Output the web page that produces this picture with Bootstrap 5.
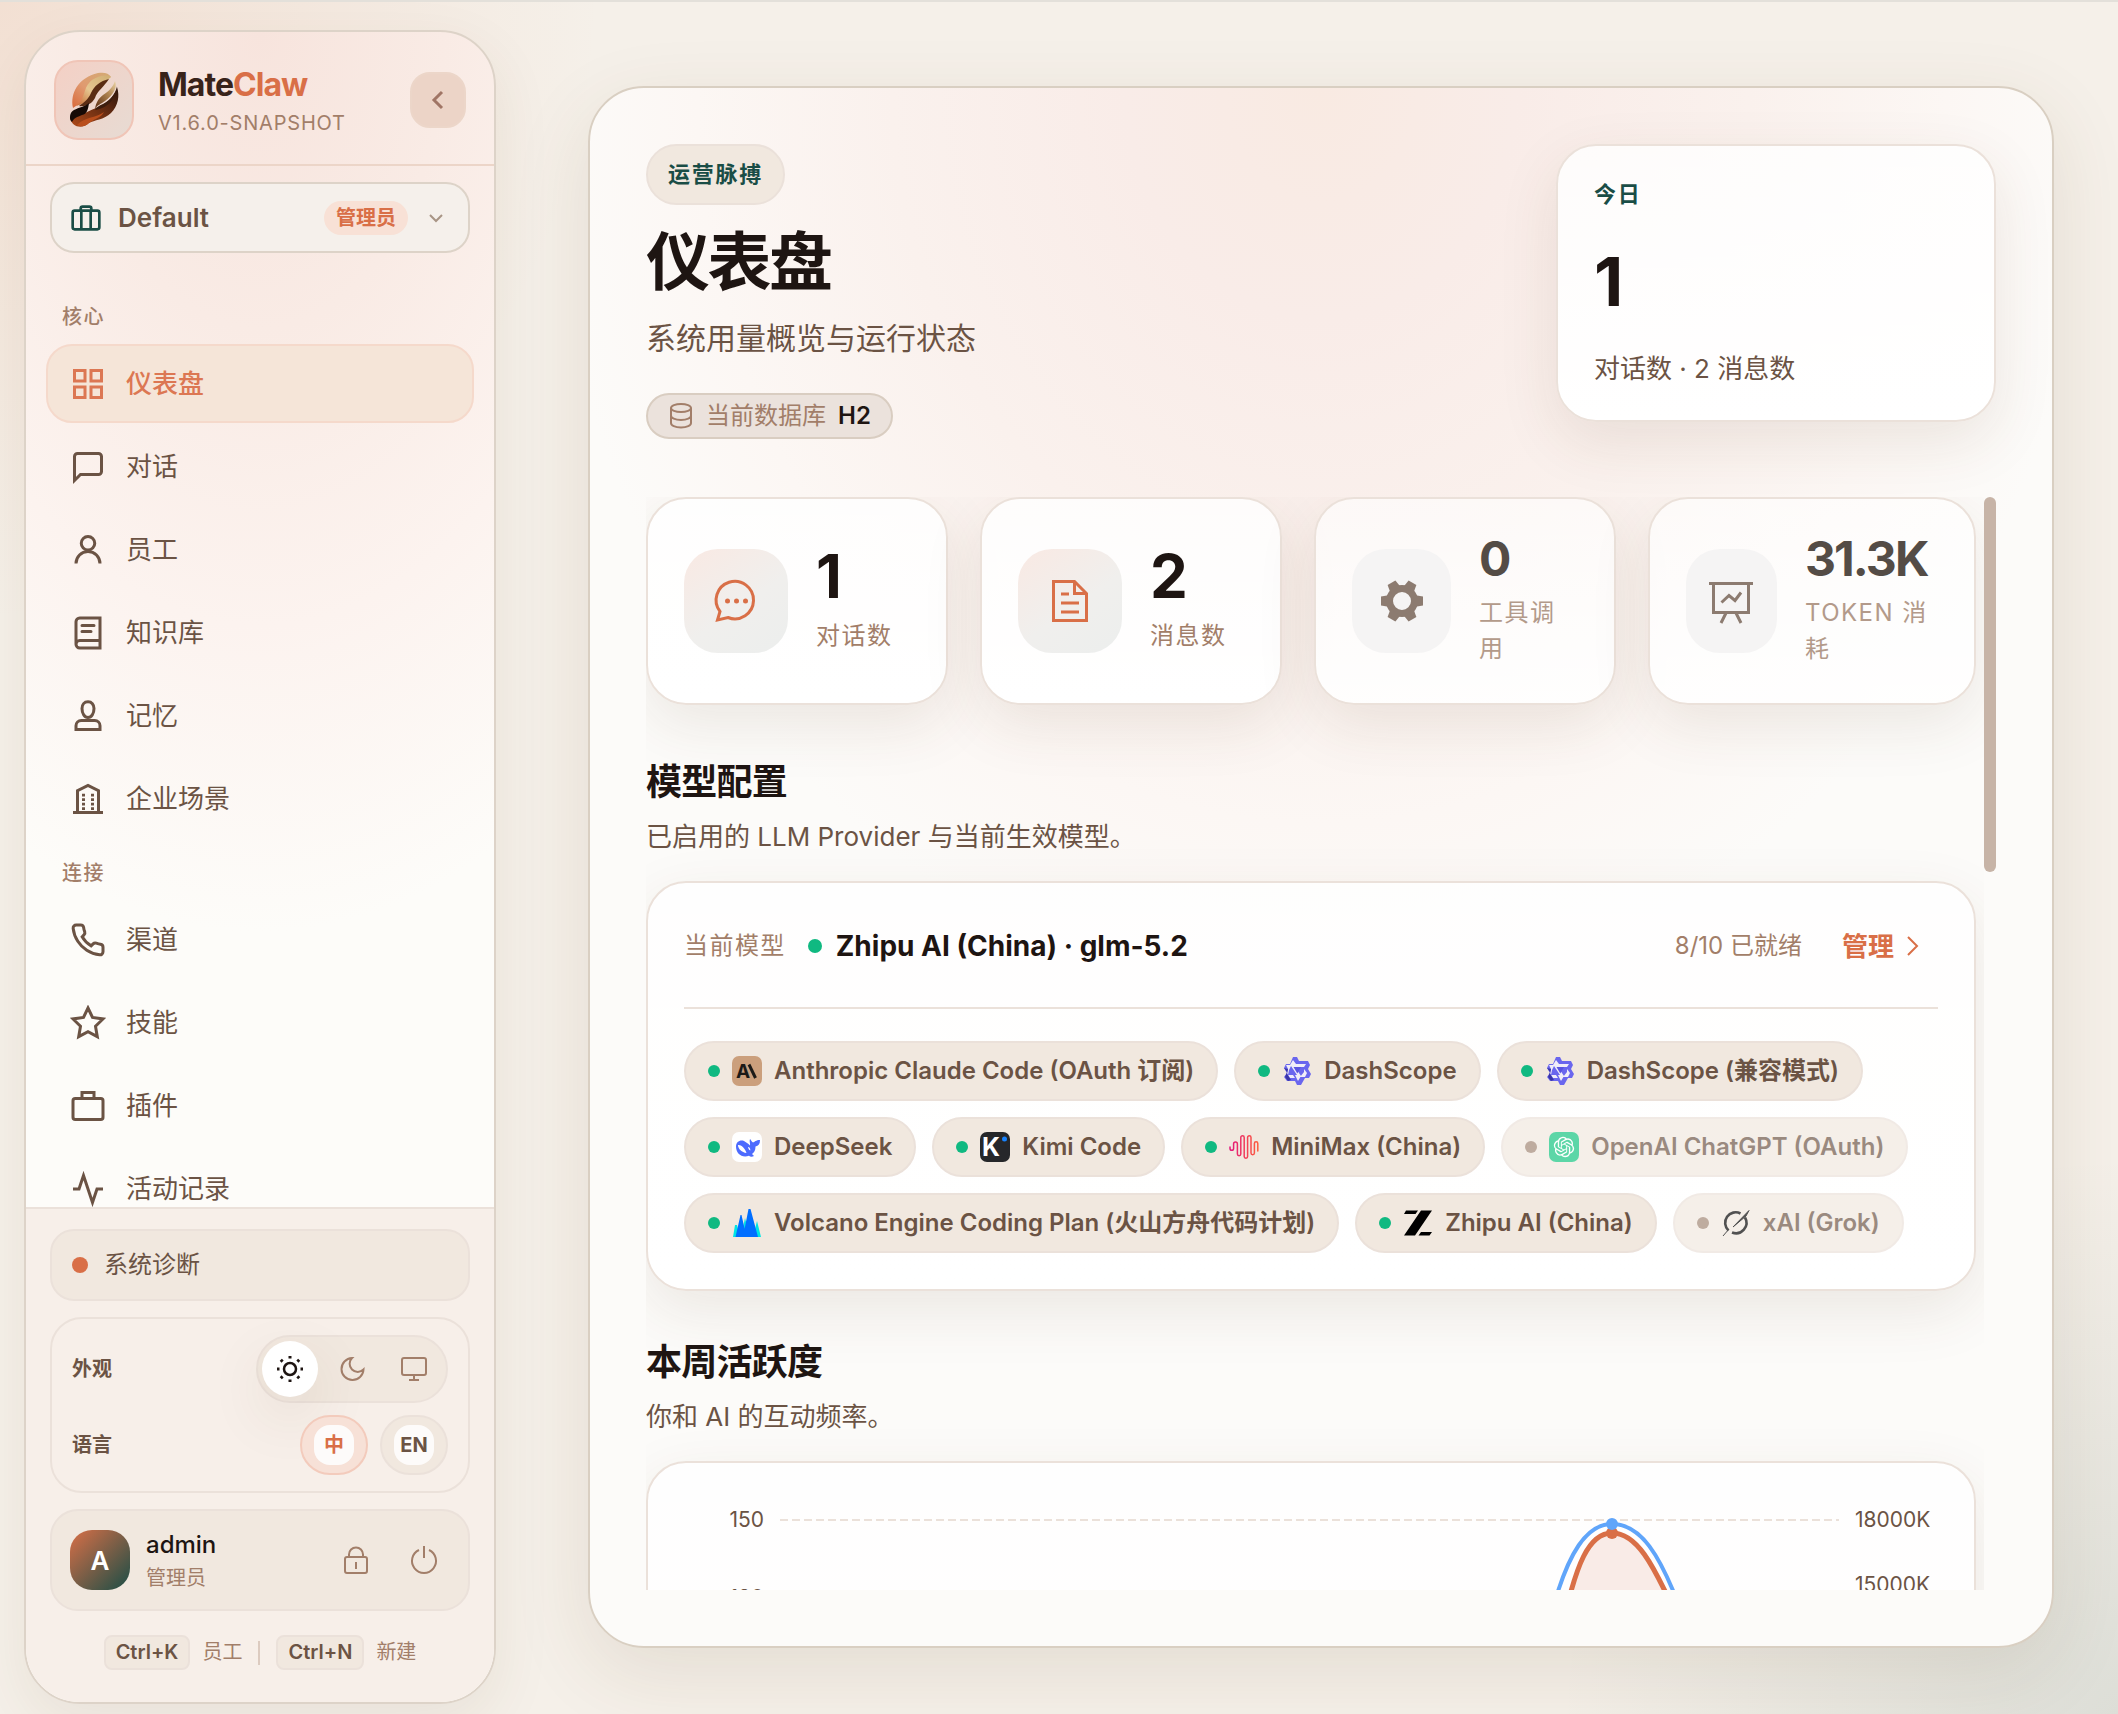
<!DOCTYPE html>
<html lang="zh-CN" data-bs-theme="light">
<head>
<meta charset="utf-8">
<meta name="viewport" content="width=device-width, initial-scale=1">
<title>MateClaw · 仪表盘</title>
<link href="https://cdn.jsdelivr.net/npm/bootstrap@5.3.0/dist/css/bootstrap.min.css" rel="stylesheet">
<style>
:root{
  --mc-primary:#d96f47; --mc-ink:#1e1512; --mc-text:#6b5344; --mc-muted:#a27e69; --mc-green:#1a4d46;
  --mc-line:#ebe1da; --mc-line-strong:#ddd3c8; --mc-sand:#f1e8df; --mc-ok:#10b981;
}
body{
  font-family:Inter,"Noto Sans CJK SC",sans-serif; color:var(--mc-text); line-height:1.5;
  height:100vh; overflow:hidden; border-top:2px solid #e3e0da;
  padding:28px 64px 10px 24px; gap:92px;
  background:
    radial-gradient(ellipse 600px 620px at 0 0,rgba(232,150,110,.18),transparent),
    radial-gradient(ellipse 560px 560px at 100% 100%,rgba(26,77,70,.11),transparent),
    #f5f0e9;
}
svg{flex:none;display:block}
.ico{fill:none;stroke:currentColor;stroke-width:2}
.ico-bold{stroke-width:3}
button{color:inherit}

/* sidebar */
.side{
  width:472px; border:2px solid var(--mc-line-strong); border-radius:56px;
  background:radial-gradient(ellipse 560px 900px at 50% 0,#f7e4dd 0%,#f9ebe5 33%,#fcf3ef 66%,#fdfcf9 100%);
  box-shadow:0 20px 60px rgba(90,60,30,.08);
}
.side-head{padding:28px 28px 24px;border-bottom:2px solid #ecd5c8}
.logo-tile{width:80px;height:80px;border-radius:24px;border:2px solid #f0c5b7;background:linear-gradient(135deg,#f4d0c5,#e7dbd3)}
.brand{padding-top:4px}
.brand-name{font-size:32px;font-weight:700;line-height:38px;letter-spacing:-.03em;color:#38231a;margin-bottom:4px}
.brand-name span{color:var(--mc-primary)}
.brand-ver{font-size:20px;line-height:30px;letter-spacing:.04em;color:var(--mc-muted)}
.fold-btn{width:56px;height:56px;border-radius:20px;border:2px solid #ecd6c9;background:#ecd4c7;color:#a07565}
.ws-btn{margin:16px 24px 0;height:71px;flex:none;border-radius:24px;border:2px solid var(--mc-line-strong);background:#f5f0eb;padding:0 20px 0 18px;gap:16px}
.ws-btn .case{color:var(--mc-green)}
.ws-btn .caret{color:#a89585}
.ws-name{font-size:26px;font-weight:600}
.ws-role{font-size:20px;font-weight:600;line-height:34px;border-radius:17px;padding:0 12px;background:#f8e1d6;color:var(--mc-primary)}
.nav-scroll{padding:49px 20px 0}
.nav-title{font-size:20px;font-weight:500;line-height:30px;letter-spacing:.08em;padding-left:16px;margin-bottom:12px;color:var(--mc-muted)}
.nav-list{gap:4px;margin-bottom:20px}
.nav-list .nav-link{height:79px;padding:0 22px;gap:20px;font-size:26px;color:var(--mc-text);border:2px solid transparent;border-radius:26px}
.nav-list .nav-link.active{background:#f5e5d8;border-color:#f5d9cb;color:#dc7753;font-weight:500}
.side-foot{border-top:2px solid var(--mc-line);background:#f7efe9;padding:20px 24px 32px;gap:16px}
.diag{height:72px;border-radius:24px;border:2px solid var(--mc-line);background:var(--mc-sand);padding:0 20px;gap:16px;font-size:24px}
.diag i{width:16px;height:16px;border-radius:50%;background:var(--mc-primary)}
.prefs{border:2px solid var(--mc-line);border-radius:32px;padding:16px 20px;gap:12px}
.pref-label{font-size:20px;font-weight:600}
.seg{height:68px;border:2px solid var(--mc-line);border-radius:34px;background:var(--mc-sand);padding:4px;gap:6px}
.seg button{width:56px;height:56px;border:0;border-radius:50%;background:none;color:var(--mc-muted);padding:0}
.seg button.on{background:#fff;color:var(--mc-ink);box-shadow:0 20px 60px rgba(90,60,30,.10)}
.langs{gap:12px}
.lang{width:68px;height:60px;border-radius:30px;border:2px solid var(--mc-line);background:var(--mc-sand);padding:0;font-size:20px;font-weight:700}
.lang span{width:40px;height:40px;border-radius:16px;background:#fdfbfa}
.lang.on{border-color:#f3cbbc;background:#f7e1d7;color:var(--mc-primary)}
.user{height:102px;border:2px solid var(--mc-line);border-radius:28px;background:var(--mc-sand);padding:0 16px 0 18px}
.avatar{width:60px;height:60px;border-radius:22px;background:linear-gradient(135deg,#d96f47,#1a4d46);color:#fff;font-size:26px;font-weight:600}
.user-name{font-size:24px;font-weight:500;line-height:36px;color:var(--mc-ink)}
.user-role{font-size:20px;line-height:30px;color:var(--mc-muted)}
.user-acts{gap:12px}
.plain-btn{width:56px;height:56px;border:0;background:none;color:var(--mc-muted);padding:0}
.keys{margin-top:8px;gap:12px;font-size:20px;color:var(--mc-muted);line-height:35px}
.keys kbd{font:600 20px/31px Inter,sans-serif;border:2px solid var(--mc-line);border-radius:8px;background:var(--mc-sand);color:var(--mc-text);padding:0 10px}
.keys i{width:2px;height:24px;background:#dccbc0;margin:0 4px}

/* main panel */
.panel{
  margin:56px 0; border:2px solid #d9cfc2; border-radius:56px; padding:56px; gap:58px; min-width:0;
  background:radial-gradient(ellipse 780px 920px at 50% 0,#f9eae2 0%,#f9ece8 25%,#faf1ed 55%,#fcf7f4 80%,#fcfbf9 100%);
  box-shadow:0 24px 80px rgba(90,60,30,.11);
}
.eyebrow{font-size:22px;font-weight:600;line-height:33px;letter-spacing:.08em;color:var(--mc-green)}
.eyebrow-pill{border:2px solid var(--mc-line);border-radius:31px;background:var(--mc-sand);padding:12px 20px}
.page-title{font-size:64px;font-weight:700;line-height:74px;letter-spacing:-.04em;color:var(--mc-ink);margin:20px 0 14px}
.page-sub{font-size:30px;line-height:50px;margin:0 0 30px}
.db-pill{height:46px;border:2px solid #d9cdc1;border-radius:23px;background:#ebe2dc;padding:0 20px;gap:12px;font-size:24px;color:var(--mc-muted)}
.db-pill strong{font-weight:600;color:var(--mc-ink)}
.surface{border:2px solid var(--mc-line);background:linear-gradient(180deg,rgba(255,255,255,.82),#fff);box-shadow:0 20px 60px rgba(90,60,30,.10)}
.today{width:440px;height:278px;border-radius:40px;padding:32px 36px}
.today-num{font-size:68px;font-weight:700;line-height:80px;color:var(--mc-ink)}
.today-desc{font-size:26px;line-height:38px}
.scroller{min-height:0}
.feed{margin-right:12px;padding-right:8px;overflow:hidden;min-height:0}
.thumb{position:absolute;top:0;right:0;width:12px;height:34.3%;border-radius:6px;background:#c7b4a7}
.stats{gap:32px;padding-bottom:6px}
.stat{flex:1 1 0;height:208px;border-radius:40px;padding:0 36px 4px;gap:28px}
.stat.wide{flex:0 0 328px}
.stat-ico{flex:0 0 104px;height:104px;margin-top:4px;border-radius:34px;background:linear-gradient(145deg,#f9e9e3,#f0efed 55%,#eceeed);color:var(--mc-primary)}
.stat-num{font-size:60px;font-weight:700;line-height:64px;letter-spacing:-.04em;color:var(--mc-ink);margin-bottom:10px}
.stat-label{font-size:24px;line-height:36px;letter-spacing:.06em;color:var(--mc-muted)}
.stat.quiet{background:linear-gradient(180deg,rgba(255,255,255,.6),rgba(255,255,255,.9))}
.quiet .stat-ico{flex-basis:99px;background:#f5f4f4;color:#8c7b70}
.quiet.wide .stat-ico{flex-basis:91px}
.quiet .stat-num{font-size:48px;line-height:56px;color:#544c46;margin-bottom:8px}
.quiet .stat-label{color:#b39a8a}
.sec-title{font-size:36px;font-weight:700;line-height:54px;letter-spacing:-.02em;color:var(--mc-ink);margin:44px 0 8px}
.sec-sub{font-size:26px;line-height:40px;margin:0 0 24px}
.box{border-radius:40px;padding:36px}
.cur{height:90px;margin-bottom:32px;padding-bottom:34px;border-bottom:2px solid var(--mc-line)}
.cur-label{font-size:24px;letter-spacing:.06em;color:var(--mc-muted)}
.cur-dot{width:14px;height:14px;border-radius:50%;background:var(--mc-ok);margin:0 14px 0 22px}
.cur-name{font-size:28px;font-weight:700;color:var(--mc-ink)}
.cur-count{font-size:24px;color:var(--mc-muted)}
.cur-link{font-size:26px;font-weight:600;color:var(--mc-primary);gap:12px;padding:0 18px 0 40px}
.chips{gap:16px}
.chip{height:60px;border:2px solid var(--mc-line);border-radius:30px;background:var(--mc-sand);padding:0 22px;gap:12px;font-size:24px;font-weight:600;color:var(--mc-text)}
.chip i{width:12px;height:12px;border-radius:50%;background:var(--mc-ok)}
.chip.off{opacity:.68}
.chip.off i{background:#a08573}
.chart text{font-family:Inter,sans-serif;font-size:21px;fill:var(--mc-text)}
</style>
</head>
<body class="d-flex m-0">

<aside class="side d-flex flex-column flex-shrink-0 overflow-hidden">
  <header class="side-head d-flex align-items-center">
    <span class="logo-tile d-flex align-items-center justify-content-center">
      <svg width="76" height="76" viewBox="2 2 76 76" role="img" aria-label="MateClaw">
        <defs>
          <linearGradient id="bA" x1="0" y1="1" x2="1" y2="0"><stop offset="0" stop-color="#d9693a"/><stop offset=".45" stop-color="#e09a70"/><stop offset="1" stop-color="#d3ab74"/></linearGradient>
          <linearGradient id="bB" x1="0" y1="1" x2="1" y2="0"><stop offset="0" stop-color="#c4652f"/><stop offset=".45" stop-color="#e6c690"/><stop offset="1" stop-color="#cfae72"/></linearGradient>
          <linearGradient id="bC" x1="0" y1="1" x2="1" y2="0"><stop offset="0" stop-color="#b04a1a"/><stop offset=".5" stop-color="#6e2f12"/><stop offset="1" stop-color="#2a150b"/></linearGradient>
          <linearGradient id="bD" x1="0" y1="1" x2="1" y2="0"><stop offset="0" stop-color="#5a2c12"/><stop offset=".6" stop-color="#b08552"/><stop offset="1" stop-color="#ead3a4"/></linearGradient>
        </defs>
        <path fill="url(#bA)" d="M19 48C16 33 24 18 44 13 50 12 55 13 57 17 48 19 42 25 38 34 34 42 27 42 19 48Z"/>
        <path fill="url(#bB)" d="M22 46C32 40 28 28 38 20 44 16 52 14 57 17 52 22 46 24 42 31 38 38 33 43 22 46Z"/>
        <path fill="#5b2d14" d="M55 19C46 21 40 26 37 33 34 40 29 43 25 46 31 47 38 44 41 38 43 31 50 27 55 19Z"/>
        <path fill="url(#bC)" d="M63 27C66 36 64 46 57 53 50 60 40 60 35 63 29 69 18 68 16 58 26 56 32 52 42 48 52 44 60 38 63 27Z"/>
        <path fill="#160a06" d="M16 57C17 47 26 50 35 43 34 50 33 54 28 55 23 57 20 58 18 62 16 60 16 59 16 57Z"/>
        <path fill="#b94e1c" d="M23 65C30 57 42 58 50 52 47 58 40 59 35 63 31 67 27 67 23 65Z"/>
        <path fill="url(#bD)" d="M61 21C64 28 58 36 51 41 47 44 43 45 41 49 42 43 44 39 49 35 55 31 59 27 61 21Z"/>
        <path fill="#3d1d0d" d="M63 26C62 34 56 40 49 44 45 46 42 47 41 50 50 49 62 42 63 26Z"/>
      </svg>
    </span>
    <div class="brand ms-4 flex-grow-1">
      <div class="brand-name">Mate<span>Claw</span></div>
      <div class="brand-ver">V1.6.0-SNAPSHOT</div>
    </div>
    <button type="button" class="fold-btn d-flex align-items-center justify-content-center p-0" aria-label="收起侧栏">
      <svg class="ico ico-bold" width="24" height="24" viewBox="0 0 24 24"><path d="M16 4 8 12l8 8"/></svg>
    </button>
  </header>

  <button type="button" class="ws-btn d-flex align-items-center">
    <svg class="ico case" width="32" height="32" viewBox="0 0 24 24"><rect x="2" y="6.500" width="20" height="14" rx="1.500"/><path d="M8 6.500V5A1.500 1.500 0 0 1 9.500 3.500h5A1.500 1.500 0 0 1 16 5v1.500M8.500 6.500v14M15.500 6.500v14"/></svg>
    <span class="ws-name">Default</span>
    <span class="ws-role ms-auto">管理员</span>
    <svg class="ico caret" width="24" height="24" viewBox="0 0 24 24"><path d="m6 9 6 6 6-6"/></svg>
  </button>

  <div class="nav-scroll flex-grow-1 overflow-hidden">
    <div class="nav-title">核心</div>
    <nav class="nav-list nav flex-column flex-nowrap">
      <a href="#" class="nav-link active d-flex align-items-center" aria-current="page"><svg class="ico" width="36" height="36" viewBox="0 0 24 24"><path d="M3 3h7v7H3zM14 3h7v7h-7zM3 14h7v7H3zM14 14h7v7h-7z"/></svg>仪表盘</a>
      <a href="#" class="nav-link d-flex align-items-center"><svg class="ico" width="36" height="36" viewBox="0 0 24 24"><path d="M21 15a2 2 0 0 1-2 2H7l-4 4V5a2 2 0 0 1 2-2h14a2 2 0 0 1 2 2z"/></svg>对话</a>
      <a href="#" class="nav-link d-flex align-items-center"><svg class="ico" width="36" height="36" viewBox="0 0 24 24"><circle cx="12" cy="7.500" r="4.500"/><path d="M4 21a8 8 0 0 1 16 0"/></svg>员工</a>
      <a href="#" class="nav-link d-flex align-items-center"><svg class="ico" width="36" height="36" viewBox="0 0 24 24"><path d="M4 19.500A2.500 2.500 0 0 1 6.500 17H20M6.500 2H20v20H6.500A2.500 2.500 0 0 1 4 19.500v-15A2.500 2.500 0 0 1 6.500 2zM8 7h8M8 11h6" stroke-linecap="round"/></svg>知识库</a>
      <a href="#" class="nav-link d-flex align-items-center"><svg class="ico" width="36" height="36" viewBox="0 0 24 24"><path d="M12 2.500c-2.500 0-4 1.900-4 4.500 0 3.400 1.700 6 4 6s4-2.600 4-6c0-2.600-1.500-4.500-4-4.500zM4 21v-2.500A3.500 3.500 0 0 1 7.500 15h9a3.500 3.500 0 0 1 3.500 3.500V21zM12 12v3"/></svg>记忆</a>
      <a href="#" class="nav-link d-flex align-items-center"><svg class="ico" width="36" height="36" viewBox="0 0 24 24"><path d="M2 21h20M5 21V6.500L12 3l7 3.500V21"/><path stroke-dasharray="1.800 1.200" d="M9 8.500v11M15 8.500v11"/></svg>企业场景</a>
    </nav>
    <div class="nav-title">连接</div>
    <nav class="nav-list nav flex-column flex-nowrap">
      <a href="#" class="nav-link d-flex align-items-center"><svg class="ico" width="36" height="36" viewBox="0 0 24 24"><path d="M22 16.900v3a2 2 0 0 1-2.200 2 19.800 19.800 0 0 1-8.600-3.100 19.500 19.500 0 0 1-6-6A19.800 19.800 0 0 1 2.100 4.200 2 2 0 0 1 4.100 2h3a2 2 0 0 1 2 1.700c.1 1 .4 1.900.7 2.800a2 2 0 0 1-.5 2.100L8.100 9.900a16 16 0 0 0 6 6l1.300-1.300a2 2 0 0 1 2.100-.5c.9.300 1.800.6 2.800.7a2 2 0 0 1 1.700 2.100z"/></svg>渠道</a>
      <a href="#" class="nav-link d-flex align-items-center"><svg class="ico" width="36" height="36" viewBox="0 0 24 24"><path d="m12 2 3 6.300 7 1-5 4.900 1.200 6.900L12 17.800l-6.200 3.300L7 14.200 2 9.300l7-1z"/></svg>技能</a>
      <a href="#" class="nav-link d-flex align-items-center"><svg class="ico" width="36" height="36" viewBox="0 0 24 24"><rect x="2" y="7" width="20" height="14" rx="1.500"/><path d="M8 7V3h8v4"/></svg>插件</a>
      <a href="#" class="nav-link d-flex align-items-center"><svg class="ico" width="36" height="36" viewBox="0 0 24 24"><path d="M22 12h-4l-3 9L9 3l-3 9H2"/></svg>活动记录</a>
    </nav>
  </div>

  <footer class="side-foot d-flex flex-column flex-shrink-0">
    <button type="button" class="diag d-flex align-items-center"><i></i>系统诊断</button>
    <div class="prefs d-flex flex-column">
      <div class="d-flex align-items-center justify-content-between">
        <span class="pref-label">外观</span>
        <div class="seg d-flex" role="group" aria-label="外观">
          <button type="button" class="on d-flex align-items-center justify-content-center" aria-label="浅色"><svg class="ico ico-bold" width="28" height="28" viewBox="0 0 28 28"><circle cx="14" cy="14" r="6" stroke-width="2.500"/><path d="M14 1v2.500M14 24.500V27M1 14h2.500M24.500 14H27M4.800 4.800l1.800 1.800M21.400 21.400l1.800 1.800M23.200 4.800l-1.800 1.800M6.600 21.400l-1.800 1.800"/></svg></button>
          <button type="button" class="d-flex align-items-center justify-content-center" aria-label="深色"><svg class="ico" width="28" height="28" viewBox="0 0 28 28"><path d="M14 3A11 11 0 1 0 25.500 14.500 8 8 0 0 1 14 3z"/></svg></button>
          <button type="button" class="d-flex align-items-center justify-content-center" aria-label="跟随系统"><svg class="ico" width="28" height="28" viewBox="0 0 28 28"><rect x="2" y="3" width="24" height="17" rx="2"/><path d="M9 25h10M14 20v5"/></svg></button>
        </div>
      </div>
      <div class="langs d-flex align-items-center">
        <span class="pref-label me-auto">语言</span>
        <button type="button" class="lang on d-flex align-items-center justify-content-center"><span class="d-flex align-items-center justify-content-center">中</span></button>
        <button type="button" class="lang d-flex align-items-center justify-content-center"><span class="d-flex align-items-center justify-content-center">EN</span></button>
      </div>
    </div>
    <div class="user d-flex align-items-center">
      <span class="avatar d-flex align-items-center justify-content-center">A</span>
      <div class="ms-3 flex-grow-1">
        <div class="user-name">admin</div>
        <div class="user-role">管理员</div>
      </div>
      <div class="user-acts d-flex">
        <button type="button" class="plain-btn d-flex align-items-center justify-content-center" aria-label="锁定"><svg class="ico" width="28" height="32" viewBox="0 0 28 32"><rect x="3" y="13" width="22" height="16" rx="2"/><path d="M7 13v-2.500a7 7 0 0 1 14 0V13M14 18v7"/></svg></button>
        <button type="button" class="plain-btn d-flex align-items-center justify-content-center" aria-label="退出"><svg class="ico" width="32" height="32" viewBox="0 0 32 32"><path d="M11 6a12 12 0 1 0 10 0M16 2v12"/></svg></button>
      </div>
    </div>
    <div class="keys d-flex align-items-center justify-content-center">
      <kbd>Ctrl+K</kbd><span>员工</span><i></i><kbd>Ctrl+N</kbd><span>新建</span>
    </div>
  </footer>
</aside>

<main class="panel d-flex flex-column flex-grow-1">
  <header class="d-flex justify-content-between align-items-start">
    <div class="d-flex flex-column align-items-start">
      <span class="eyebrow eyebrow-pill">运营脉搏</span>
      <h1 class="page-title">仪表盘</h1>
      <p class="page-sub">系统用量概览与运行状态</p>
      <span class="db-pill d-inline-flex align-items-center">
        <svg class="ico" width="26" height="28" viewBox="0 0 26 28"><ellipse cx="13" cy="6" rx="10" ry="4"/><path d="M3 6v15c0 2.500 4 4.500 10 4.500s10-2 10-4.500V6M3 13.500c0 2.500 4 4.500 10 4.500s10-2 10-4.500"/></svg>
        当前数据库 <strong>H2</strong>
      </span>
    </div>
    <section class="surface today d-flex flex-column justify-content-between">
      <span class="eyebrow">今日</span>
      <span class="today-num">1</span>
      <span class="today-desc">对话数 · 2 消息数</span>
    </section>
  </header>

  <div class="scroller position-relative flex-grow-1 d-flex flex-column">
    <div class="feed flex-grow-1">
      <section class="stats d-flex">
        <article class="surface stat d-flex align-items-center">
          <span class="stat-ico d-flex align-items-center justify-content-center"><svg class="ico ico-bold" width="48" height="48" viewBox="0 0 48 48"><path d="M5.500 43 8 34.500A18.700 18.700 0 1 1 16 40.500z"/><g fill="currentColor" stroke="none"><circle cx="15.500" cy="24" r="2.500"/><circle cx="24.500" cy="24" r="2.500"/><circle cx="33.500" cy="24" r="2.500"/></g></svg></span>
          <div><div class="stat-num">1</div><div class="stat-label">对话数</div></div>
        </article>
        <article class="surface stat d-flex align-items-center">
          <span class="stat-ico d-flex align-items-center justify-content-center"><svg class="ico ico-bold" width="48" height="48" viewBox="0 0 48 48"><path d="M7.500 4.500h21l12 12v27h-33zM28.500 4.500v12h12M15 17h8M15 26h18M15 35h18"/></svg></span>
          <div><div class="stat-num">2</div><div class="stat-label">消息数</div></div>
        </article>
        <article class="surface stat quiet d-flex align-items-center">
          <span class="stat-ico d-flex align-items-center justify-content-center"><svg width="48" height="48" viewBox="-24 -24 48 48"><circle r="12.500" fill="none" stroke="currentColor" stroke-width="7"/><g fill="currentColor"><path id="tooth" d="M13-5.500h2l6 1v9l-6 1h-2z"/><use href="#tooth" transform="rotate(60)"/><use href="#tooth" transform="rotate(120)"/><use href="#tooth" transform="rotate(180)"/><use href="#tooth" transform="rotate(240)"/><use href="#tooth" transform="rotate(300)"/></g></svg></span>
          <div><div class="stat-num">0</div><div class="stat-label">工具调用</div></div>
        </article>
        <article class="surface stat quiet wide d-flex align-items-center">
          <span class="stat-ico d-flex align-items-center justify-content-center"><svg class="ico ico-bold" width="48" height="48" viewBox="0 0 48 48"><path d="M1 6.500h44M5.500 6.500v29h35v-29M18 36l-5 10M28 36l5 10M13.500 25.500l7.500-7 6 5 6-8"/></svg></span>
          <div><div class="stat-num">31.3K</div><div class="stat-label">TOKEN 消耗</div></div>
        </article>
      </section>

      <h2 class="sec-title">模型配置</h2>
      <p class="sec-sub">已启用的 LLM Provider 与当前生效模型。</p>
      <section class="surface box">
        <div class="cur d-flex align-items-center">
          <span class="cur-label">当前模型</span><i class="cur-dot"></i><span class="cur-name">Zhipu AI (China) · glm-5.2</span>
          <span class="cur-count ms-auto">8/10 已就绪</span>
          <a href="#" class="cur-link d-inline-flex align-items-center text-decoration-none">管理<svg class="ico" width="14" height="22" viewBox="0 0 14 22"><path d="m2 2 9 9-9 9"/></svg></a>
        </div>
        <div class="chips d-flex flex-wrap">
          <span class="chip d-inline-flex align-items-center"><i></i><svg width="30" height="30" viewBox="0 0 30 30"><rect width="30" height="30" rx="7" fill="#cb9f7c"/><text x="4" y="22" font-family="Inter,sans-serif" font-size="19" font-weight="700" fill="#1c1a17">A</text><path d="M17 8.500 23.500 22" stroke="#1c1a17" stroke-width="3"/></svg>Anthropic Claude Code (OAuth 订阅)</span>
          <span class="chip d-inline-flex align-items-center"><i></i><svg width="30" height="30" viewBox="0 0 30 30"><g id="qwen"><path fill="#6a66ee" d="M11 1h4l2 4h9l2 4-2 4 3 5-2 4h-4l-4 7h-4l-2-4H5l-3-4 3-4-3-5 2-4h4z"/><path fill="#f1edf8" d="M11 4l3 4h10l-2 3h-9l6 9-3 5-3-6h2l-6-9-2 4-1 5h5l2 3H8l-3-5 1-4-2-4h4zM22 13l3 4-2 4h-5l4-5z"/><path fill="#5a54e0" d="M11.500 11h7.500l-3.700 6.500z"/><path fill="#3a35a8" d="M2 12l3 4-2 5 3 4 3-1-4-6 1-5z"/></g></svg>DashScope</span>
          <span class="chip d-inline-flex align-items-center"><i></i><svg width="30" height="30" viewBox="0 0 30 30"><use href="#qwen"/></svg>DashScope (兼容模式)</span>
          <span class="chip d-inline-flex align-items-center"><i></i><svg width="30" height="30" viewBox="0 0 30 30"><rect width="30" height="30" rx="7" fill="#fff"/><path fill="#4d6bfe" d="M4 14.500C4 10 8 7.500 12 9l3 2c1 .5 2 1.500 3 2.500.5-2-1-4 0-6.500 1 .5 1.500 3 3 3.500C22.500 10 24 8 28 8c0 4-1.500 6-4.500 6.500 0 4-1.500 6-3.500 7.500l2 2c-2 1.200-4 .8-5-.2C10 26.500 4 21.500 4 14.500z"/><path fill="#fff" d="M6 13c3-.5 7 3 8.500 8C10 20.500 6 17 6 13zM16 15c1.500 0 2.500 1.500 2.300 3.500-1.300-.5-2-2-2.300-3.500z"/></svg>DeepSeek</span>
          <span class="chip d-inline-flex align-items-center"><i></i><svg width="30" height="30" viewBox="0 0 30 30"><rect width="30" height="30" rx="7" fill="#26272a"/><text x="2" y="24" font-family="Inter,sans-serif" font-size="25" font-weight="700" fill="#fff">K</text><circle cx="24.500" cy="7" r="2.500" fill="#1783ff"/></svg>Kimi Code</span>
          <span class="chip d-inline-flex align-items-center"><i></i><svg width="30" height="30" viewBox="0 0 30 30"><defs><linearGradient id="mm" gradientUnits="userSpaceOnUse" x1="0" x2="30" y1="0" y2="0"><stop stop-color="#e2167e"/><stop offset="1" stop-color="#fe603c"/></linearGradient></defs><path fill="none" stroke="url(#mm)" stroke-width="1.500" stroke-linecap="round" d="M1 15v1.500a1.800 1.800 0 0 0 3.600 0V12a1.900 1.900 0 0 1 3.800 0v10a1.700 1.700 0 0 0 3.400 0V5.500a1.700 1.700 0 0 1 3.400 0V24.500a1.700 1.700 0 0 0 3.400 0V5.500a1.700 1.700 0 0 1 3.400 0V21a1.700 1.700 0 0 0 3.400 0V11.500a1.700 1.700 0 0 1 3.400 0V19"/></svg>MiniMax (China)</span>
          <span class="chip off d-inline-flex align-items-center"><i></i><svg width="30" height="30" viewBox="0 0 30 30"><rect width="30" height="30" rx="7" fill="#10c47e"/><path transform="translate(4.800 4.800) scale(.85)" fill="#fff" d="M22.2819 9.8211a5.9847 5.9847 0 0 0-.5157-4.9108 6.0462 6.0462 0 0 0-6.5098-2.9A6.0651 6.0651 0 0 0 4.9807 4.1818a5.9847 5.9847 0 0 0-3.9977 2.9 6.0462 6.0462 0 0 0 .7427 7.0966 5.98 5.98 0 0 0 .511 4.9107 6.051 6.051 0 0 0 6.5146 2.9001A5.9847 5.9847 0 0 0 13.2599 24a6.0557 6.0557 0 0 0 5.7718-4.2058 5.9894 5.9894 0 0 0 3.9977-2.9001 6.0557 6.0557 0 0 0-.7475-7.0729zm-9.022 12.6081a4.4755 4.4755 0 0 1-2.8764-1.0408l.1419-.0804 4.7783-2.7582a.7948.7948 0 0 0 .3927-.6813v-6.7369l2.02 1.1686a.071.071 0 0 1 .038.052v5.5826a4.504 4.504 0 0 1-4.4945 4.4944zm-9.6607-4.1254a4.4708 4.4708 0 0 1-.5346-3.0137l.142.0852 4.783 2.7582a.7712.7712 0 0 0 .7806 0l5.8428-3.3685v2.3324a.0804.0804 0 0 1-.0332.0615L9.74 19.9502a4.4992 4.4992 0 0 1-6.1408-1.6464zM2.3408 7.8956a4.485 4.485 0 0 1 2.3655-1.9728V11.6a.7664.7664 0 0 0 .3879.6765l5.8144 3.3543-2.0201 1.1685a.0757.0757 0 0 1-.071 0l-4.8303-2.7865A4.504 4.504 0 0 1 2.3408 7.872zm16.5963 3.8558L13.1038 8.364 15.1192 7.2a.0757.0757 0 0 1 .071 0l4.8303 2.7913a4.4944 4.4944 0 0 1-.6765 8.1042v-5.6772a.79.79 0 0 0-.407-.667zm2.0107-3.0231l-.142-.0852-4.7735-2.7818a.7759.7759 0 0 0-.7854 0L9.409 9.2297V6.8974a.0662.0662 0 0 1 .0284-.0615l4.8303-2.7866a4.4992 4.4992 0 0 1 6.6802 4.66zM8.3065 12.863l-2.02-1.1638a.0804.0804 0 0 1-.038-.0567V6.0742a4.4992 4.4992 0 0 1 7.3757-3.4537l-.142.0805L8.704 5.459a.7948.7948 0 0 0-.3927.6813zm1.0976-2.3654l2.602-1.4998 2.6069 1.4998v2.9994l-2.5974 1.4997-2.6067-1.4997Z"/></svg>OpenAI ChatGPT (OAuth)</span>
          <span class="chip d-inline-flex align-items-center"><i></i><svg width="30" height="30" viewBox="0 0 30 30"><path fill="#00e5e5" d="M1 29 3 17h2l3 12zM21 29l4-16 4 16zM9 29l4-19 5 19z"/><path fill="#006eff" d="M3.500 29 8.500 7h1l5 22zM11 29l5.500-28h2L26 29z"/></svg>Volcano Engine Coding Plan (火山方舟代码计划)</span>
          <span class="chip d-inline-flex align-items-center"><i></i><svg width="30" height="30" viewBox="0 0 30 30"><path d="M3 2.500h12L12.500 6H1zM18 2.500h11L12 27.500H1zM18 24h11l-2.500 3.500h-11z"/></svg>Zhipu AI (China)</span>
          <span class="chip off d-inline-flex align-items-center"><i></i><svg width="30" height="30" viewBox="0 0 30 30" fill="none" stroke="#000" stroke-width="2.600"><path d="M7.500 22.500A10.500 10.500 0 0 1 19.500 5.500M24 9.500A10.500 10.500 0 0 1 11 24.500"/><path d="M12 19 28 2.500 25 8 12 19zM2 28l6-7" stroke-width="1" fill="#000"/></svg>xAI (Grok)</span>
        </div>
      </section>

      <h2 class="sec-title">本周活跃度</h2>
      <p class="sec-sub">你和 AI 的互动频率。</p>
      <section class="surface box">
        <svg class="chart w-100" viewBox="0 0 1254 440" role="img" aria-label="本周活跃度">
          <g stroke="#ebe1da" stroke-width="2" stroke-dasharray="8 4"><path d="M96 21h1059M96 99h1059M96 177h1059M96 255h1059M96 333h1059"/></g>
          <path fill="#f9ebe7" d="M880 120C894 70 904 34 928 34c24 0 44 28 66 86z"/>
          <path fill="none" stroke="#d96f47" stroke-width="5" d="M880 120C892 68 904 34 928 34c24 0 40 28 66 86"/>
          <path fill="none" stroke="#60a5fa" stroke-width="4" d="M866 120C884 50 904 25 928 25c28 0 48 28 72 95"/>
          <circle cx="928" cy="34" r="6" fill="#d96f47"/><circle cx="928" cy="25" r="6" fill="#60a5fa"/>
          <g text-anchor="end"><text x="80" y="28">150</text><text x="80" y="106">120</text></g>
          <text x="1171" y="28">18000K</text><text x="1171" y="93">15000K</text>
        </svg>
      </section>
    </div>
    <div class="thumb"></div>
  </div>
</main>

<script src="https://cdn.jsdelivr.net/npm/bootstrap@5.3.0/dist/js/bootstrap.bundle.min.js"></script>
</body>
</html>
